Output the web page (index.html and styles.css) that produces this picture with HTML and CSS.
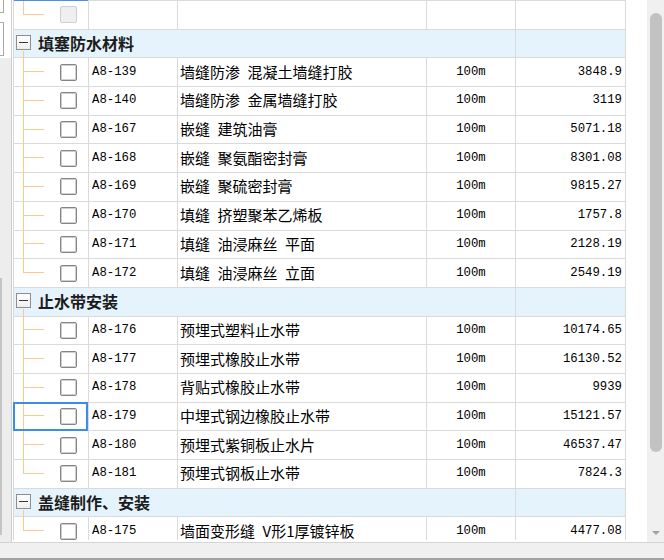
FILE: index.html
```html
<!DOCTYPE html>
<html lang="zh-CN">
<head>
<meta charset="utf-8">
<title>定额列表</title>
<link rel="stylesheet" href="styles.css">
</head>
<body>
<div class="app">
  <div class="main">
    <div class="lp">
      <div class="lp-a"></div>
      <div class="lp-b"></div>
      <div class="lp-c"></div>
    </div>
    <div class="gap1"></div>
    <div class="view">
      <div class="grid">
        <div class="row first">
          <div class="c tree"><i class="topblue"></i><i class="v half"></i><i class="h"></i><span class="cb dis"></span></div>
          <div class="c code"></div><div class="c name"></div><div class="c unit"></div><div class="c price"></div>
        </div>

        <div class="row hdr">
          <div class="c grp"><span class="mb"></span><b>填塞防水材料</b><i class="v below"></i></div>
          <div class="c price"></div>
        </div>
        <div class="row"><div class="c tree"><i class="v"></i><i class="h"></i><span class="cb"></span></div><div class="c code">A8-139</div><div class="c name">墙缝防渗&ensp;混凝土墙缝打胶</div><div class="c unit">100m</div><div class="c price">3848.9</div></div>
        <div class="row"><div class="c tree"><i class="v"></i><i class="h"></i><span class="cb"></span></div><div class="c code">A8-140</div><div class="c name">墙缝防渗&ensp;金属墙缝打胶</div><div class="c unit">100m</div><div class="c price">3119</div></div>
        <div class="row"><div class="c tree"><i class="v"></i><i class="h"></i><span class="cb"></span></div><div class="c code">A8-167</div><div class="c name">嵌缝&ensp;建筑油膏</div><div class="c unit">100m</div><div class="c price">5071.18</div></div>
        <div class="row"><div class="c tree"><i class="v"></i><i class="h"></i><span class="cb"></span></div><div class="c code">A8-168</div><div class="c name">嵌缝&ensp;聚氨酯密封膏</div><div class="c unit">100m</div><div class="c price">8301.08</div></div>
        <div class="row"><div class="c tree"><i class="v"></i><i class="h"></i><span class="cb"></span></div><div class="c code">A8-169</div><div class="c name">嵌缝&ensp;聚硫密封膏</div><div class="c unit">100m</div><div class="c price">9815.27</div></div>
        <div class="row"><div class="c tree"><i class="v"></i><i class="h"></i><span class="cb"></span></div><div class="c code">A8-170</div><div class="c name">填缝&ensp;挤塑聚苯乙烯板</div><div class="c unit">100m</div><div class="c price">1757.8</div></div>
        <div class="row"><div class="c tree"><i class="v"></i><i class="h"></i><span class="cb"></span></div><div class="c code">A8-171</div><div class="c name">填缝&ensp;油浸麻丝&ensp;平面</div><div class="c unit">100m</div><div class="c price">2128.19</div></div>
        <div class="row"><div class="c tree"><i class="v half"></i><i class="h"></i><span class="cb"></span></div><div class="c code">A8-172</div><div class="c name">填缝&ensp;油浸麻丝&ensp;立面</div><div class="c unit">100m</div><div class="c price">2549.19</div></div>

        <div class="row hdr">
          <div class="c grp"><span class="mb"></span><b>止水带安装</b><i class="v below"></i></div>
          <div class="c price"></div>
        </div>
        <div class="row"><div class="c tree"><i class="v"></i><i class="h"></i><span class="cb"></span></div><div class="c code">A8-176</div><div class="c name">预埋式塑料止水带</div><div class="c unit">100m</div><div class="c price">10174.65</div></div>
        <div class="row"><div class="c tree"><i class="v"></i><i class="h"></i><span class="cb"></span></div><div class="c code">A8-177</div><div class="c name">预埋式橡胶止水带</div><div class="c unit">100m</div><div class="c price">16130.52</div></div>
        <div class="row"><div class="c tree"><i class="v"></i><i class="h"></i><span class="cb"></span></div><div class="c code">A8-178</div><div class="c name">背贴式橡胶止水带</div><div class="c unit">100m</div><div class="c price">9939</div></div>
        <div class="row"><div class="c tree focus"><i class="v"></i><i class="h"></i><span class="cb"></span></div><div class="c code">A8-179</div><div class="c name">中埋式钢边橡胶止水带</div><div class="c unit">100m</div><div class="c price">15121.57</div></div>
        <div class="row"><div class="c tree"><i class="v"></i><i class="h"></i><span class="cb"></span></div><div class="c code">A8-180</div><div class="c name">预埋式紫铜板止水片</div><div class="c unit">100m</div><div class="c price">46537.47</div></div>
        <div class="row"><div class="c tree"><i class="v half"></i><i class="h"></i><span class="cb"></span></div><div class="c code">A8-181</div><div class="c name">预埋式钢板止水带</div><div class="c unit">100m</div><div class="c price">7824.3</div></div>

        <div class="row hdr">
          <div class="c grp"><span class="mb"></span><b>盖缝制作、安装</b><i class="v below"></i></div>
          <div class="c price"></div>
        </div>
        <div class="row"><div class="c tree"><i class="v half"></i><i class="h"></i><span class="cb"></span></div><div class="c code">A8-175</div><div class="c name">墙面变形缝&ensp;V形1厚镀锌板</div><div class="c unit">100m</div><div class="c price">4477.08</div></div>
      </div>
    </div>
    <div class="spacer"></div>
    <div class="sb">
      <div class="thumb"></div>
      <div class="sb-fill"></div>
      <div class="arrow"></div>
    </div>
  </div>
  <div class="status"></div>
</div>
</body>
</html>
```

FILE: styles.css
```css
* { box-sizing: border-box; }

body {
  margin: 0;
  width: 664px;
  height: 560px;
  overflow: hidden;
  background: #fff;
  font-family: "Noto Sans CJK SC", "Noto Sans", sans-serif;
  color: #000;
}

.app {
  display: flex;
  flex-direction: column;
  height: 560px;
}

.main {
  display: flex;
  height: 542px;
}

/* left panel edge */
.lp {
  width: 12px;
  flex: none;
  border-right: 1px solid #cfcfcf;
  background: linear-gradient(#fff 0 58px, #ededed 58px);
  display: flex;
  flex-direction: column;
}
.lp-a {
  width: 4px;
  height: 13px;
  border-right: 1px solid #a9a9a9;
  border-bottom: 1px solid #a9a9a9;
  background: #fff;
}
.lp-b {
  width: 4px;
  height: 34px;
  margin-top: 9px;
  border: 1px solid #a9a9a9;
  border-left: none;
  background: #fff;
}
.lp-c {
  width: 2px;
  height: 257px;
  margin-top: 222px;
  background: #c4c4c4;
}

.gap1 { width: 1px; flex: none; }

.view {
  width: 613px;
  height: 540px;
  overflow: hidden;
  flex: none;
}

.grid {
  border-left: 1px solid #dadada;
  border-top: 1px solid #dadada;
}

.row {
  display: grid;
  grid-template-columns: 75px 89px 249px 89px 110px;
  height: 28.7px;
}

.c {
  border-right: 1px solid #dadada;
  border-bottom: 1px solid #dadada;
  display: flex;
  align-items: center;
  min-width: 0;
  white-space: nowrap;
  position: relative;
}

.code, .unit, .price {
  font-family: "Liberation Mono", "Noto Sans CJK SC", monospace;
  font-size: 12.3px;
  padding-bottom: 1px;
}
.code { padding-left: 3px; }
.unit { justify-content: center; }
.price { justify-content: flex-end; padding-right: 3px; }

.name {
  font-size: 15px;
  padding-left: 2px;
  padding-bottom: 2px;
  line-height: 1;
}

/* tree column */
.tree i { position: absolute; display: block; background: #fdc98b; }
.tree .v { left: 9px; top: 0; bottom: -1px; width: 1px; }
.tree .v.half { bottom: auto; height: 50%; }
.tree .h { left: 9px; top: calc(50% - 1px); width: 21px; height: 1px; }
.tree .topblue { left: 0; right: 0; top: -1px; height: 1px; background: #4a90e2; }

.cb {
  width: 17px;
  height: 17px;
  margin-left: 46px;
  border: 1px solid #858585;
  border-radius: 2px;
  box-shadow: inset 0 0 0 1px #cfcfcf;
  background: #fff;
}
.cb.dis {
  border-color: #cfcfcf;
  box-shadow: none;
  background: #efefef;
}

.focus::after {
  content: "";
  position: absolute;
  left: -1px;
  top: -1px;
  right: 0;
  bottom: -1px;
  border: 2px solid #3d8ce6;
}

/* group header */
.hdr .grp, .hdr .price { background: #e5f3fd; }
.grp {
  grid-column: span 4;
  padding-bottom: 2px;
}
.grp b {
  font-size: 16px;
  font-weight: 700;
  line-height: 1;
  color: #1c1c1c;
  margin-left: 7px;
}
.mb {
  position: relative;
  width: 15px;
  height: 15px;
  margin-left: 2px;
  border: 1px solid #8e8e8e;
  background: linear-gradient(#fff, #efefef);
}
.mb::after {
  content: "";
  position: absolute;
  left: 2px;
  top: 6px;
  width: 9px;
  height: 1px;
  background: #3a3a3a;
}
.grp .v.below {
  position: absolute;
  display: block;
  left: 9px;
  width: 1px;
  top: calc(50% + 7px);
  bottom: -1px;
  background: #fdc98b;
}

.spacer { flex: 1; }

/* scrollbar */
.sb {
  width: 17px;
  flex: none;
  background: #f0f0f0;
  display: flex;
  flex-direction: column;
  align-items: center;
}
.thumb {
  margin-top: 13px;
  width: 12px;
  height: 439px;
  border-radius: 6px;
  background: #c2c2c2;
}
.sb-fill { flex: 1; }
.arrow {
  width: 0;
  height: 0;
  border-left: 4px solid transparent;
  border-right: 4px solid transparent;
  border-top: 4px solid #a3a3a3;
  margin-bottom: 7px;
}

.status {
  height: 18px;
  border-top: 1px solid #d4d4d4;
  border-bottom: 2px solid #a2a2a2;
  background: #f0f0f0;
}
```
